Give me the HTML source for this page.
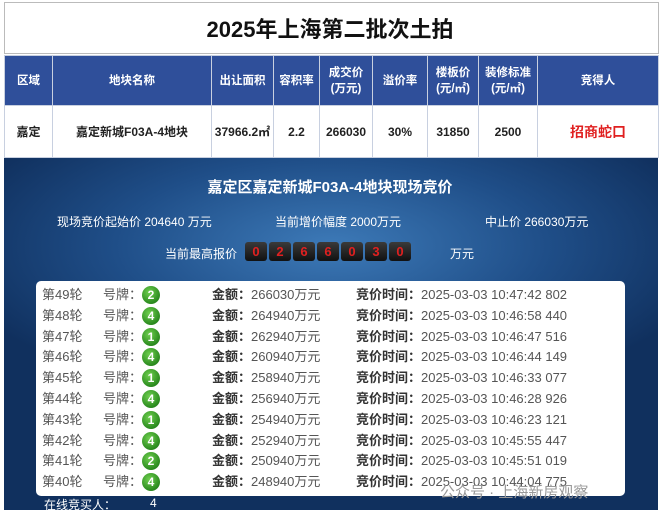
<!DOCTYPE html>
<html><head><meta charset="utf-8"><style>
*{margin:0;padding:0;box-sizing:border-box}
body{width:660px;height:515px;background:#fff;font-family:"Liberation Sans","Noto Sans CJK SC",sans-serif;position:relative;overflow:hidden}
.a{position:absolute;white-space:nowrap}
table{position:absolute;left:4px;top:55px;width:655px;border-collapse:collapse;table-layout:fixed}
td{text-align:center;font-weight:bold;font-size:12px;border:1px solid #c8d0e0}
tr.h td{background:#2f4f9a;color:#fff;height:50px;line-height:16px;font-size:11.5px}
tr.d td{background:#fff;color:#222;height:52px}
.panel{position:absolute;left:4px;top:158px;width:654px;height:352px;background:radial-gradient(ellipse 60% 45% at 50% 25%,#3d7ab8 0%,#1f4e88 55%,#10305e 100%)}
.w{position:absolute;left:36px;top:281px;width:589px;height:215px;background:#fff;border-radius:5px}
.row{position:absolute;left:0;font-size:13px;color:#555;height:20px;line-height:20px}
.row span{position:absolute}
.c{width:18px;height:18px;border-radius:50%;background:radial-gradient(circle at 40% 35%,#6fcf4f,#2a8a1e 70%,#1f6a16);color:#fff;font-weight:bold;text-align:center;line-height:18px;font-size:12px;top:1px}
.b{display:inline-block;width:22px;height:19px;margin-right:2px;background:linear-gradient(#3a3a3a,#111);border-radius:3px;color:#e02020;font-weight:bold;text-align:center;line-height:19px;font-size:13px}
</style></head><body>
<div class="a" style="left:4px;top:2px;width:655px;height:52px;border:1px solid #bbb"></div>
<div class="a" style="left:0;width:660px;top:12px;text-align:center;font-size:22px;font-weight:bold;color:#111">2025年上海第二批次土拍</div>
<table>
<colgroup><col style="width:48px"><col style="width:159px"><col style="width:62px"><col style="width:46px"><col style="width:53px"><col style="width:55px"><col style="width:51px"><col style="width:59px"><col></colgroup>
<tr class="h"><td>区域</td><td>地块名称</td><td>出让面积</td><td>容积率</td><td>成交价<br>(万元)</td><td>溢价率</td><td>楼板价<br>(元/㎡)</td><td>装修标准<br>(元/㎡)</td><td>竞得人</td></tr>
<tr class="d"><td>嘉定</td><td>嘉定新城F03A-4地块</td><td>37966.2㎡</td><td>2.2</td><td>266030</td><td>30%</td><td>31850</td><td>2500</td><td style="color:#e02020;font-size:14px">招商蛇口</td></tr>
</table>
<div class="panel"></div>
<div class="a" style="left:0;width:660px;top:176px;text-align:center;color:#fff;font-weight:bold;font-size:15px">嘉定区嘉定新城F03A-4地块现场竞价</div>
<div class="a" style="left:57px;top:213px;color:#fff;font-size:12px">现场竞价起始价 204640 万元</div>
<div class="a" style="left:275px;top:213px;color:#fff;font-size:12px">当前增价幅度 2000万元</div>
<div class="a" style="left:485px;top:213px;color:#fff;font-size:12px">中止价 266030万元</div>
<div class="a" style="left:165px;top:245px;color:#fff;font-size:12px">当前最高报价</div>
<div class="a" style="left:245px;top:242px"><span class="b">0</span><span class="b">2</span><span class="b">6</span><span class="b">6</span><span class="b">0</span><span class="b">3</span><span class="b">0</span></div>
<div class="a" style="left:450px;top:245px;color:#fff;font-size:12px">万元</div>
<div class="w"></div>
<div id="rows"></div>
<div class="a" style="left:44px;top:496px;color:#fff;font-size:12px">在线竞买人：</div>
<div class="a" style="left:150px;top:496px;color:#fff;font-size:12px">4</div>
<div class="a" style="left:440px;top:481px;color:#999;font-size:15px">公众号 · 上海新房观察</div>
<script>
var d=[[49,2,266030,"10:47:42 802"],[48,4,264940,"10:46:58 440"],[47,1,262940,"10:46:47 516"],[46,4,260940,"10:46:44 149"],[45,1,258940,"10:46:33 077"],[44,4,256940,"10:46:28 926"],[43,1,254940,"10:46:23 121"],[42,4,252940,"10:45:55 447"],[41,2,250940,"10:45:51 019"],[40,4,248940,"10:44:04 775"]];
var h="";d.forEach(function(r,i){var y=285+i*20.8;h+='<div class="row" style="top:'+y+'px;width:660px"><span style="left:42px">第'+r[0]+'轮</span><span style="left:103px">号牌：</span><span class="c" style="left:142px">'+r[1]+'</span><span style="left:212px"><b style="color:#333">金额：</b>'+r[2]+'万元</span><span style="left:356px"><b style="color:#333">竞价时间：</b>2025-03-03 '+r[3]+'</span></div>'});
document.getElementById("rows").innerHTML=h;
</script>
</body></html>
